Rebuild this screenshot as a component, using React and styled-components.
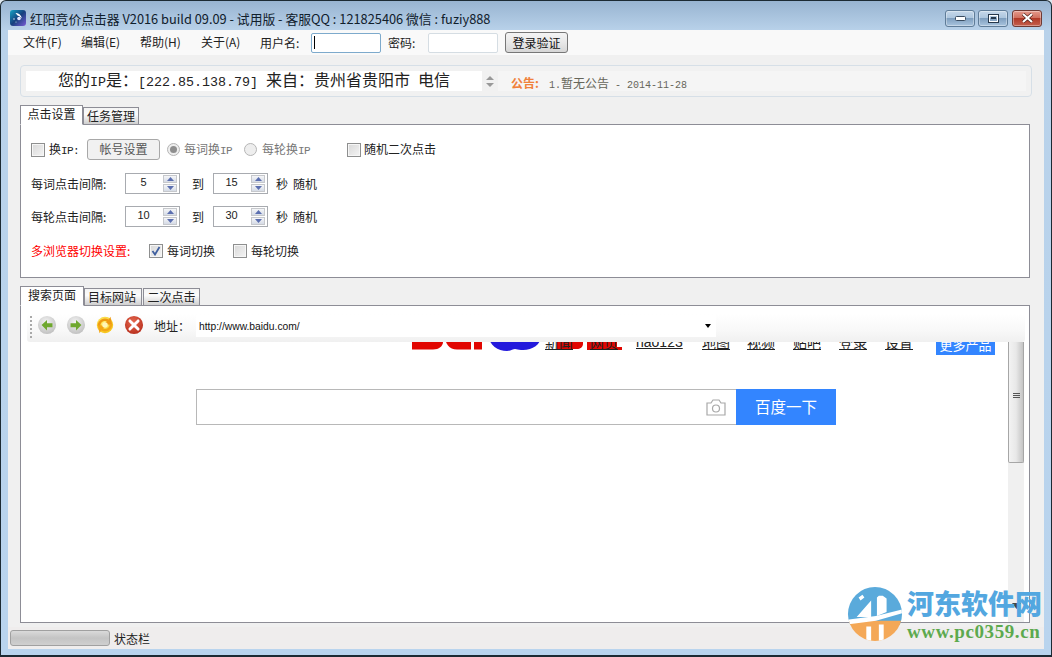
import React from "react";
import styled, { createGlobalStyle } from "styled-components";

const Global = createGlobalStyle`
  html, body { margin: 0; padding: 0; background: #dfe8f0; }
  * { box-sizing: border-box; }
  body { font-family: "Liberation Sans", "Noto Sans CJK SC", sans-serif; font-size: 12px; color: #111; }
`;

const Window = styled.div`
  position: relative; width: 1052px; height: 657px; overflow: hidden;
  display: flex; flex-direction: column;
  border: 1px solid #1c2a33; border-bottom-width: 2px; border-radius: 6px 6px 0 0;
  background: linear-gradient(#98b4d1 0, #b9d2ea 30px, #b9d4ee 100%);
`;
const TitleBar = styled.div`
  height: 29px; flex: none; display: flex; align-items: center; padding: 5px 9px 0 9px; gap: 4px;
`;
const TitleText = styled.div`
  font-family: "Noto Sans CJK SC", sans-serif; font-size: 12.8px; color: #10202c; flex: 1; white-space: nowrap;
`;
const WinButtons = styled.div`display: flex; gap: 3px;`;
const WinBtn = styled.div`
  width: 30px; height: 17px; margin-left: ${p => p.$close ? 1 : 0}px; border: 1px solid ${p => p.$close ? "#6e3a34" : "#5f7c98"}; border-radius: 3px;
  display: flex; align-items: center; justify-content: center;
  background: ${p => p.$close ? "linear-gradient(#e59a8c 0, #d0705f 45%, #b13a28 50%, #c4604e 100%)" : "linear-gradient(#c6d8ea 0, #adc6de 45%, #7f9fbf 50%, #a9c4de 100%)"};
  box-shadow: inset 0 0 0 1px rgba(255,255,255,.35);
`;
const Client = styled.div`
  flex: 1; margin: 0 7px 6px 7px; background: #f0f0f0; display: flex; flex-direction: column; min-height: 0;
`;
const MenuRow = styled.div`
  height: 25px; flex: none; background: #f9f9f9; display: flex; align-items: center; padding-left: 15px;
  font-family: "Noto Sans CJK SC", sans-serif;
`;
const MenuItem = styled.span`width: ${p => p.$w}px; font-size: 12px; color: #222; margin-top: -3px;`;
const FieldLabel = styled.span`width: ${p => p.$w}px; font-size: 12px; color: #222;`;
const TextInput = styled.div`
  width: 70px; height: 20px; background: #fff; border: 1px solid ${p => p.$focus ? "#7daacc" : "#d5dde3"}; border-radius: 2px;
  margin-right: ${p => p.$mr}px; display: flex; align-items: center; padding-left: 2px;
`;
const Caret = styled.i`display: block; width: 1px; height: 13px; background: #000;`;
const LoginBtn = styled.button`
  width: 63px; height: 21px; padding: 0; font: 12px "Noto Sans CJK SC", sans-serif; color: #111;
  background: linear-gradient(#f4f4f4, #e8e8e8 50%, #d6d6d6); border: 1px solid #777; border-radius: 3px;
`;
const Notice = styled.div`
  height: 32px; flex: none; margin: 10px 12px 0 12px; border: 1px solid #d6dfe7; border-radius: 4px; padding: 5px 5px;
  display: flex; align-items: stretch; background: #f1f1f1;
`;
const IpField = styled.div`
  width: 456px; background: #fff; font-family: "Noto Sans CJK SC", sans-serif; font-size: 16px; line-height: 16px; padding-left: 32px; white-space: nowrap; color: #222;
`;
const Mono = styled.span`font-family: "Liberation Mono", monospace; font-size: ${p => p.$s || 10}px;`;
const SmallLatin = styled.span`font-family: "Liberation Mono", monospace; font-size: 11px; letter-spacing: -.6px;`;
const NoticeSpin = styled.div`
  width: 16px; display: flex; flex-direction: column; align-items: center; justify-content: center; gap: 3px;
`;
const NoticeBoard = styled.div`
  flex: 1; margin-left: 0; background: #f5f5f5; padding: 2px 0 0 13px; display: flex; align-items: center; font-family: "Noto Sans CJK SC", sans-serif; font-size: 12px;
`;
const NoticeTag = styled.b`color: #f0813b; font-size: 12px; width: 38px;`;
const NoticeBody = styled.span`color: #66665a;`;
const TabStrip = styled.div`display: flex; align-items: flex-end; height: 20px; flex: none; margin: ${p => p.$mt}px 0 0 12px; position: relative; z-index: 1;`;
const Tab = styled.div`
  width: ${p => p.$w}px; height: ${p => p.$active ? 20 : 18}px; margin-right: ${p => p.$mr || 0}px; padding-right: ${p => p.$pr || 0}px;
  border: 1px solid #8d8d96; border-bottom: ${p => p.$active ? "1px solid #fff" : "1px solid #8d8d96"}; margin-bottom: -1px;
  background: ${p => p.$active ? "#fff" : "linear-gradient(#f4f4f4, #fbfbfb 40%, #cfcfcf)"};
  font: 12px/16px "Noto Sans CJK SC", sans-serif; text-align: center; color: #222;
`;
const SettingsPanel = styled.div`
  height: 154px; flex: none; margin-left: 12px; width: 1010px; border: 1px solid #8d8d96; background: #fff; padding: 14px 10px 0 10px;
  display: flex; flex-direction: column; font: 12px "Noto Sans CJK SC", sans-serif; color: #222;
`;
const Row = styled.div`display: flex; align-items: center; height: 21px; flex: none; margin-top: ${p => p.$mt || 0}px; ${p => p.$red ? "color: #f00;" : ""}`;
const Cell = styled.span`
  width: ${p => p.$w}px; flex: none; white-space: nowrap; padding-left: ${p => p.$pl || 0}px; margin-top: ${p => p.$up ? -3 : 0}px;
  ${p => p.$muted ? "color:#777;" : ""} ${p => p.$dark ? "color:#222;" : ""}
`;
const Check = styled.span`
  width: 14px; height: 14px; flex: none; margin-right: ${p => p.$mr ?? 4}px; border: 1px solid #8e8f8f; background: linear-gradient(135deg, #d8d8d8, #f4f4f4);
  box-shadow: inset 0 0 0 1px #f6f6f6; display: flex; align-items: center; justify-content: center;
`;
const Radio = styled.span`
  width: 13px; height: 13px; flex: none; margin-right: ${p => p.$mr}px; border-radius: 50%; border: 1px solid #b5b5b5; background: #eee;
  display: flex; align-items: center; justify-content: center;
`;
const RadioDot = styled.i`display: block; width: 7px; height: 7px; border-radius: 50%; background: #8e8e8e;`;
const FlatBtn = styled.div`
  width: 73px; height: 21px; flex: none; margin-right: 7px; border: 1px solid #a8a8a8; border-radius: 3px; background: #f1f1f1; color: #555;
  text-align: center; line-height: 18px; font-size: 12px;
`;
const SpinBox = styled.div`
  width: 55px; height: 21px; flex: none; border: 1px solid #a8abb0; display: flex; background: #fff; padding: 1px;
`;
const SpinValue = styled.span`flex: 1; text-align: center; font: 11px/14px "Liberation Sans", sans-serif; color:#222; padding-right:3px;`;
const SpinBtns = styled.div`width: 14px; margin-right: 1px; display: flex; flex-direction: column; gap: 1px;`;
const SpinBtn = styled.div`flex: 1; background: linear-gradient(#f5f6f8, #d5dbe6); border: 1px solid #c6c8cc; display: flex; align-items: center; justify-content: center;`;
const BrowserPanel = styled.div`
  position: relative; height: 318px; flex: none; margin-left: 12px; width: 1010px; border: 1px solid #8d8d96; background: #fff;
  display: flex; overflow: hidden;
`;
const Toolbar = styled.div`
  position: absolute; left: 6px; top: 8px; width: 998px; height: 28px; display: flex; align-items: center; border-radius: 3px; z-index: 2;
  background: linear-gradient(#fff 0, #f8f8f8 60%, #f0f0f0 100%); padding-bottom: 6px;
`;
const Grip = styled.div`width: 2px; height: 22px; margin: 4px 5px 0 3px; background: repeating-linear-gradient(#a9a9a9 0 2px, transparent 2px 4px); flex: none;`;
const ToolIcon = styled.svg`width: 20px; height: 20px; flex: none; margin-right: 9px;`;
const AddrLabel = styled.span`font: 12px "Noto Sans CJK SC", sans-serif; color: #222; width: 42px; margin: 1px 0 0 1px; flex: none;`;
const AddrField = styled.div`
  width: 520px; height: 22px; background: #fff; flex: none; margin-top: 2px; display: flex; align-items: center; justify-content: space-between; padding: 0 5px 0 3px;
  font: 10.3px "Liberation Sans", sans-serif; color: #111;
`;
const DropArrow = styled.i`display: block; width: 0; height: 0; border: 3px solid transparent; border-top: 4px solid #000; border-bottom: 0;`;
const WebPage = styled.div`position: relative; flex: 1; min-width: 0; display: flex; flex-direction: column; overflow: hidden;`;
const Logo = styled.svg`position: absolute; left: 391px; top: 30px; width: 215px; height: 20px;`;
const NavRow = styled.div`position: relative; height: 49px; flex: none; display: flex; align-items: flex-end; padding-left: 524px;`;
const NavLink = styled.a`
  font: 14px/16px "Noto Sans CJK SC", sans-serif; color: #222; text-decoration: underline; width: ${p => p.$w}px; flex: none; display: block; margin-bottom: 5px;
`;
const HaoLink = styled(NavLink)`font-family: "Liberation Sans", sans-serif;`;
const MoreBtn = styled.div`
  width: 59px; height: 26px; background: #3385ff; color: #fff; font: 13px "Noto Sans CJK SC", sans-serif; text-align: center; padding-top: 6px; flex: none;
`;
const SearchRow = styled.div`display: flex; margin: 34px 0 0 175px;`;
const SearchInput = styled.div`
  width: 540px; height: 36px; border: 1px solid #b8b8b8; border-right: 0; display: flex; align-items: center; justify-content: flex-end; padding-right: 10px;
`;
const SearchBtn = styled.div`
  width: 100px; height: 36px; background: #3385ff; color: #fff; font: 15.5px/34px "Noto Sans CJK SC", sans-serif; text-align: center;
`;
const ScrollBar = styled.div`
  width: 16px; flex: none; margin-right: 5px; background: #f0f0f0; margin-top: 36px; display: flex; flex-direction: column; align-items: center; position: relative;
`;
const Thumb = styled.div`
  width: 16px; height: 121px; border: 1px solid #a6a6a6; border-top: 0; border-radius: 0 0 2px 2px; background: linear-gradient(90deg, #f3f3f3, #e8e8e8 50%, #c4c4c4);
  display: flex; flex-direction: column; align-items: center; justify-content: center; gap: 1px; flex: none; padding-bottom: 14px;
`;
const ThumbLine = styled.i`display: block; width: 7px; height: 1px; background: #555;`;
const ScrollDown = styled.svg`width: 9px; height: 6px; margin-top: auto; margin-bottom: 13px;`;
const StatusBar = styled.div`
  flex: 1; margin-top: 4px; background: #efeded; display: flex; align-items: center; padding-left: 2px; font: 12px "Noto Sans CJK SC", sans-serif; color: #222; position: relative;
`;
const Progress = styled.div`
  width: 100px; height: 16px; border: 1px solid #a0a0a0; border-radius: 3px; margin-right: 4px; background: linear-gradient(#dadada, #c4c4c4 50%, #cfcfcf);
`;
const Watermark = styled.div`
  position: absolute; left: 846px; top: 585px; width: 200px; height: 60px; display: flex; z-index: 5;
`;
const WaterLogo = styled.svg`width: 56px; height: 56px; flex: none; margin-right: 4px;`;
const WaterText = styled.div`display: flex; flex-direction: column; align-items: flex-start;`;
const WaterName = styled.div`
  font: 900 27px/34px "Noto Sans CJK SC", sans-serif; color: #53a7e0; white-space: nowrap;
`;
const WaterUrl = styled.div`
  font: 700 19px/20px "Liberation Serif", serif; color: #5ca94e; margin-top: 2px; letter-spacing: .6px; white-space: nowrap;
`;

const Up = () => <svg width="7" height="4"><path d="M0 4 3.500 0 7 4z" fill="#5b6fb0" /></svg>;
const Down = () => <svg width="7" height="4"><path d="M0 0 3.500 4 7 0z" fill="#5b6fb0" /></svg>;
const Spin = ({ v }) => (
  <SpinBox><SpinValue>{v}</SpinValue><SpinBtns><SpinBtn><Up /></SpinBtn><SpinBtn><Down /></SpinBtn></SpinBtns></SpinBox>
);
const Tick = () => <svg width="10" height="10" viewBox="0 0 10 10"><path d="M1.500 5 4 8.500 8.500 1" stroke="#3f5f9f" strokeWidth="1.800" fill="none" /></svg>;
const Ball = ({ id, c1, c2 }) => (
  <defs><radialGradient id={id} cx="45%" cy="35%" r="70%"><stop offset="0" stopColor={c1} /><stop offset="1" stopColor={c2} /></radialGradient></defs>
);

export default function App() {
  return (
    <Window>
      <Global />
      <TitleBar>
        <svg width="16" height="16" viewBox="0 0 16 16" style={{ flex: "none" }}>
          <defs>
            <linearGradient id="ai" x1="0" y1="0" x2="1" y2="1"><stop offset="0" stopColor="#17a4c4" /><stop offset=".5" stopColor="#16407e" /><stop offset="1" stopColor="#7a5cd6" /></linearGradient>
          </defs>
          <rect width="16" height="16" rx="3" fill="url(#ai)" />
          <path d="M5.500 3c3-.5 5.500 2 6.500 5.500-1.500-1.500-2.500-2.500-4.500-3z" fill="#fff" />
          <circle cx="9" cy="8.500" r="1.800" fill="#dfe4ff" />
          <circle cx="4" cy="9" r=".7" fill="#fff" />
          <circle cx="6" cy="12" r=".5" fill="#cfe" />
        </svg>
        <TitleText>红阳竞价点击器 V2016 build 09.09 - 试用版 - 客服QQ : 121825406 微信 : fuziy888</TitleText>
        <WinButtons>
          <WinBtn><svg width="11" height="5"><rect x=".5" y=".5" width="10" height="4" rx="1" fill="#fff" stroke="#3a4c60" /></svg></WinBtn>
          <WinBtn><svg width="11" height="9"><rect x=".5" y=".5" width="10" height="8" fill="none" stroke="#26384c" /><rect x="1.500" y="1.500" width="8" height="6" fill="none" stroke="#fff" /><rect x="3" y="3" width="5" height="2" fill="#26384c" /></svg></WinBtn>
          <WinBtn $close><svg width="13" height="10" viewBox="0 0 13 10"><path d="M2 1 11 9M11 1 2 9" stroke="#4b1c14" strokeWidth="3.400" /><path d="M2 1 11 9M11 1 2 9" stroke="#fff" strokeWidth="2.200" /></svg></WinBtn>
        </WinButtons>
      </TitleBar>
      <Client>
        <MenuRow>
          <MenuItem $w={58}>文件(F)</MenuItem>
          <MenuItem $w={59}>编辑(E)</MenuItem>
          <MenuItem $w={61}>帮助(H)</MenuItem>
          <MenuItem $w={59}>关于(A)</MenuItem>
          <FieldLabel $w={51}>用户名:</FieldLabel>
          <TextInput $focus $mr={7}><Caret /></TextInput>
          <FieldLabel $w={40}>密码:</FieldLabel>
          <TextInput $mr={7} />
          <LoginBtn>登录验证</LoginBtn>
        </MenuRow>
        <Notice>
          <IpField>您的<Mono $s={13.33}>IP</Mono>是：<Mono $s={13.33}>[222.85.138.79] </Mono>来自：贵州省贵阳市<Mono $s={13.33}>{"\u00a0"}</Mono>电信</IpField>
          <NoticeSpin>
            <svg width="8" height="4"><path d="M0 4 4 0 8 4z" fill="#999" /></svg>
            <svg width="8" height="4"><path d="M0 0 4 4 8 0z" fill="#999" /></svg>
          </NoticeSpin>
          <NoticeBoard>
            <NoticeTag>公告:</NoticeTag>
            <NoticeBody><Mono>1.</Mono>暂无公告<Mono> - 2014-11-28</Mono></NoticeBody>
          </NoticeBoard>
        </Notice>
        <TabStrip $mt={7}>
          <Tab $w={63} $active>点击设置</Tab>
          <Tab $w={56}>任务管理</Tab>
        </TabStrip>
        <SettingsPanel>
          <Row>
            <Check />
            <Cell $w={38} $up>换<SmallLatin>IP:</SmallLatin></Cell>
            <FlatBtn>帐号设置</FlatBtn>
            <Radio $mr={4}><RadioDot /></Radio>
            <Cell $w={60} $muted $up>每词换<SmallLatin>IP</SmallLatin></Cell>
            <Radio $mr={5} />
            <Cell $w={85} $muted $up>每轮换<SmallLatin>IP</SmallLatin></Cell>
            <Check $mr={3} />
            <Cell $w={90} $up>随机二次点击</Cell>
          </Row>
          <Row $mt={13}>
            <Cell $w={94}>每词点击间隔:</Cell>
            <Spin v="5" />
            <Cell $w={33} $pl={12}>到</Cell>
            <Spin v="15" />
            <Cell $w={25} $pl={8}>秒</Cell>
            <Cell $w={30}>随机</Cell>
          </Row>
          <Row $mt={12}>
            <Cell $w={94}>每轮点击间隔:</Cell>
            <Spin v="10" />
            <Cell $w={33} $pl={12}>到</Cell>
            <Spin v="30" />
            <Cell $w={25} $pl={8}>秒</Cell>
            <Cell $w={30}>随机</Cell>
          </Row>
          <Row $red $mt={13}>
            <Cell $w={118}>多浏览器切换设置:</Cell>
            <Check><Tick /></Check>
            <Cell $w={66} $dark>每词切换</Cell>
            <Check />
            <Cell $w={60} $dark>每轮切换</Cell>
          </Row>
        </SettingsPanel>
        <TabStrip $mt={7}>
          <Tab $w={64} $active>搜索页面</Tab>
          <Tab $w={58} $mr={1} $pr={2}>目标网站</Tab>
          <Tab $w={57}>二次点击</Tab>
        </TabStrip>
        <BrowserPanel>
          <Toolbar>
            <Grip />
            <ToolIcon viewBox="0 0 22 22"><Ball id="g1" c1="#f4f4f4" c2="#bdbdbd" /><circle cx="11" cy="11" r="10" fill="url(#g1)" /><path d="M5 11 11 5.500V9h6v4.500h-6V17z" fill="#6fa82e" /></ToolIcon>
            <ToolIcon viewBox="0 0 22 22"><Ball id="g2" c1="#f4f4f4" c2="#bdbdbd" /><circle cx="11" cy="11" r="10" fill="url(#g2)" /><path d="M17 11 11 5.500V9H5v4.500h6V17z" fill="#6fa82e" /></ToolIcon>
            <ToolIcon viewBox="0 0 22 22">
              <Ball id="g3" c1="#fff27a" c2="#f5c211" />
              <circle cx="11" cy="11" r="9" fill="url(#g3)" />
              <path d="M3 12a8 8 0 0 1 12-7l2-3 2 9-9-1 3-3a5 5 0 0 0-7 5z" fill="#ef9a12" />
              <path d="M19 10a8 8 0 0 1-12 7l-2 3-2-9 9 1-3 3a5 5 0 0 0 7-5z" fill="#f3a716" />
              <circle cx="11" cy="11" r="3" fill="#fff6b8" />
            </ToolIcon>
            <ToolIcon viewBox="0 0 22 22"><Ball id="g4" c1="#e86a50" c2="#b52d1c" /><circle cx="11" cy="11" r="10" fill="url(#g4)" /><path d="M6.500 6.500 15.500 15.500M15.500 6.500 6.500 15.500" stroke="#fff" strokeWidth="3.200" strokeLinecap="round" /></ToolIcon>
            <AddrLabel>地址：</AddrLabel>
            <AddrField>http://www.baidu.com/<DropArrow /></AddrField>
          </Toolbar>
          <WebPage>
            <Logo viewBox="0 0 215 20">
              <path d="M0 0h31v6c0 4-4 7.500-10 7.500H0zM33 0h26v13.500H45C37 13.500 33 7.500 33 0zM62 0h8v13.500h-8z" fill="#e10601" />
              <path d="M77 0h52c0 9-10 15-20 14-3 0-4-1-6-1s-4 2-8 2C86 15 77 9 77 0z" fill="#2319dc" />
              <path d="M145 0h26v8c0 3-3 5-6 5h-20zM175 0h30v11h5v3h-35z" fill="#e10601" />
            </Logo>
            <NavRow>
              <NavLink $w={45}>新闻</NavLink>
              <NavLink $w={46}>网页</NavLink>
              <HaoLink $w={66}>hao123</HaoLink>
              <NavLink $w={45}>地图</NavLink>
              <NavLink $w={46}>视频</NavLink>
              <NavLink $w={46}>贴吧</NavLink>
              <NavLink $w={46}>登录</NavLink>
              <NavLink $w={51}>设置</NavLink>
              <MoreBtn>更多产品</MoreBtn>
            </NavRow>
            <SearchRow>
              <SearchInput>
                <svg width="20" height="17" viewBox="0 0 20 17" fill="none" stroke="#a8a8a8" strokeWidth="1.200"><path d="M1 4h4l2-3h6l2 3h4v12H1z" /><circle cx="10" cy="9.500" r="3.500" /></svg>
              </SearchInput>
              <SearchBtn>百度一下</SearchBtn>
            </SearchRow>
          </WebPage>
          <ScrollBar>
            <Thumb><ThumbLine /><ThumbLine /><ThumbLine /></Thumb>
            <ScrollDown viewBox="0 0 9 6"><path d="M0 0h9L4.500 6z" fill="#444" /></ScrollDown>
          </ScrollBar>
        </BrowserPanel>
        <StatusBar>
          <Progress />
          状态栏
        </StatusBar>
      </Client>
      <Watermark>
        <WaterLogo viewBox="0 0 58 58">
          <defs><clipPath id="wc"><circle cx="29" cy="29" r="28" /></clipPath></defs>
          <g clipPath="url(#wc)">
            <rect width="58" height="40" fill="#5aaadb" />
            <rect y="36" width="58" height="22" fill="#f4a857" />
            <path d="M0 40 30 36 58 28v-4L30 31 0 35z" fill="#fff" />
            <path d="M10 32 25 15v17zM31 12l2-2h4l4 3v14l-10 4z" fill="#fff" />
            <path d="M20 42h5v16h-5zM33 40h5v18h-5zM12 12l4-3 2 3-4 3z" fill="#fff" />
          </g>
        </WaterLogo>
        <WaterText>
          <WaterName>河东软件网</WaterName>
          <WaterUrl>www.pc0359.cn</WaterUrl>
        </WaterText>
      </Watermark>
    </Window>
  );
}
